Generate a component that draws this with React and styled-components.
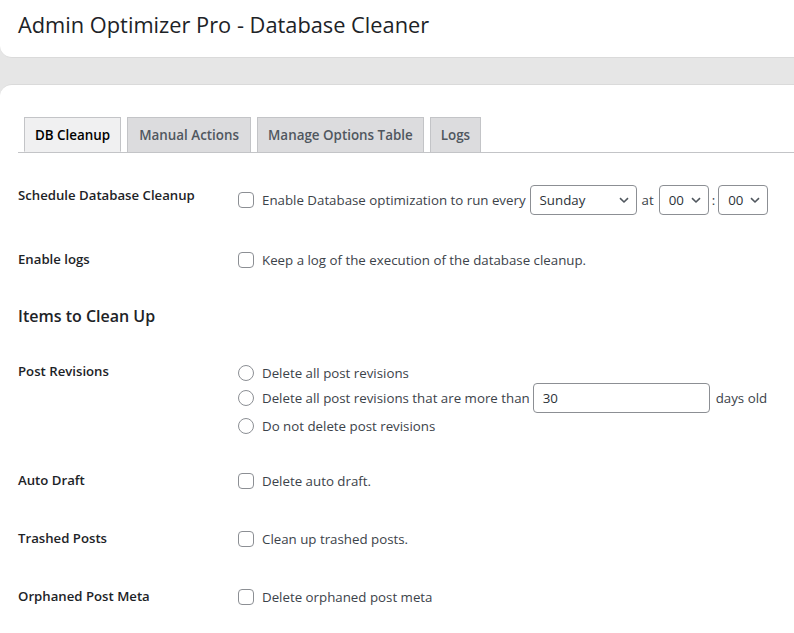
import React from 'react'
import styled, { createGlobalStyle } from 'styled-components'

const GlobalStyle = createGlobalStyle`
    body {
        margin: 0;
        background: #e6e6e6;
        font-family: "Open Sans", "Noto Sans", sans-serif;
        color: #3c434a;
    }
`;

const Header = styled.header`
    background: #fff;
    height: 58px;
    box-sizing: border-box;
    border-bottom: 1px solid #dadada;
    border-bottom-left-radius: 12px;
    padding: 9px 0 0 18px;
`;

const Title = styled.h1`
    margin: 0;
    font-size: 21.8px;
    font-weight: 400;
    color: #1d2327;
    line-height: 32px;
`;

const Card = styled.main`
    margin-top: 26px;
    background: #fff;
    border-top: 1px solid #dadada;
    border-top-left-radius: 12px;
    padding: 32px 0 0 18px;
    min-height: 540px;
`;

const TabBar = styled.nav`
    display: flex;
    gap: 6px;
    padding-left: 6px;
    border-bottom: 1px solid #c3c4c7;
    height: 35px;
`;

const Tab = styled.div`
    display: flex;
    align-items: center;
    padding: 0 ${({ px }) => px || 10}px;
    height: 35px;
    box-sizing: border-box;
    border: 1px solid #c3c4c7;
    border-bottom: ${({ active }) => (active ? '1px solid #f0f0f1' : 'none')};
    background: ${({ active }) => (active ? '#f0f0f1' : '#dcdcde')};
    color: ${({ active }) => (active ? '#000' : '#50575e')};
    font-weight: 600;
    font-size: 13.4px;
`;

const Form = styled.div`
    padding-top: 12px;
`;

const Row = styled.div`
    display: grid;
    grid-template-columns: 220px 1fr;
    padding: ${({ pad }) => pad || '20px 0'};
`;

const Label = styled.div`
    font-size: 13.2px;
    font-weight: 600;
    color: #1d2327;
    line-height: 20px;
`;

const Field = styled.div`
    display: flex;
    flex-direction: column;
    padding-top: ${({ top }) => top || 0}px;
`;

const Line = styled.label`
    display: flex;
    align-items: center;
    font-size: 13.3px;
    color: #3c434a;
    line-height: 20px;
    white-space: nowrap;
    margin-bottom: ${({ after }) => after || 0}px;
`;

const Check = styled.span`
    width: 16px;
    height: 16px;
    box-sizing: border-box;
    border: 1px solid #8c8f94;
    border-radius: ${({ round }) => (round ? '50%' : '4px')};
    background: #fff;
    margin-right: 8px;
    flex-shrink: 0;
`;

const Select = styled.div`
    display: inline-flex;
    align-items: center;
    justify-content: space-between;
    width: ${({ w }) => w}px;
    height: 30px;
    box-sizing: border-box;
    border: 1px solid #8c8f94;
    border-radius: 4px;
    padding: 0 6px 0 9px;
    margin: ${({ m }) => m};
    color: #2c3338;
    font-size: 13.3px;
    svg {
        flex-shrink: 0;
    }
`;

const Input = styled.div`
    width: 177px;
    height: 30px;
    box-sizing: border-box;
    border: 1px solid #8c8f94;
    border-radius: 4px;
    padding: 0 9px;
    margin: 0 6px 0 3px;
    display: flex;
    align-items: center;
    color: #2c3338;
    font-size: 13.3px;
`;

const Heading = styled.h2`
    margin: 0;
    font-size: 16px;
    font-weight: 600;
    color: #1d2327;
    line-height: 24px;
    padding: 14px 0 6px;
`;

const Chevron = () => (
    <svg width="12" height="12" viewBox="0 0 12 12">
        <path d="M2 4.2 L6 8 L10 4.2" fill="none" stroke="#50575e" strokeWidth="1.6" />
    </svg>
);

const Dropdown = ({ w, value, m }) => (
    <Select w={w} m={m}>
        <span>{value}</span>
        <Chevron />
    </Select>
);

const CheckRow = ({ label, text, pad }) => (
    <Row pad={pad}>
        <Label>{label}</Label>
        <Field top={1}>
            <Line><Check />{text}</Line>
        </Field>
    </Row>
);

const App = () => (
    <>
        <GlobalStyle />
        <Header>
            <Title>Admin Optimizer Pro - Database Cleaner</Title>
        </Header>
        <Card>
            <TabBar>
                <Tab active>DB Cleanup</Tab>
                <Tab px={11}>Manual Actions</Tab>
                <Tab>Manage Options Table</Tab>
                <Tab>Logs</Tab>
            </TabBar>
            <Form>
                <Row pad="20px 0 20px">
                    <Label>Schedule Database Cleanup</Label>
                    <Field>
                        <Line>
                            <Check />
                            Enable Database optimization to run every
                            <Dropdown w={107} value="Sunday" m="0 5px 0 4px" />
                            at
                            <Dropdown w={50} value="00" m="0 3px 0 5px" />
                            :
                            <Dropdown w={50} value="00" m="0 0 0 3px" />
                        </Line>
                    </Field>
                </Row>
                <CheckRow label="Enable logs" text="Keep a log of the execution of the database cleanup." pad="14px 0 20px" />
                <Heading>Items to Clean Up</Heading>
                <Row pad="27px 0 20px">
                    <Label>Post Revisions</Label>
                    <Field top={2}>
                        <Line><Check round />Delete all post revisions</Line>
                        <Line after={3}>
                            <Check round />
                            Delete all post revisions that are more than
                            <Input>30</Input>
                            days old
                        </Line>
                        <Line><Check round />Do not delete post revisions</Line>
                    </Field>
                </Row>
                <CheckRow label="Auto Draft" text="Delete auto draft." pad="14px 0 20px" />
                <CheckRow label="Trashed Posts" text="Clean up trashed posts." pad="17px 0 20px" />
                <CheckRow label="Orphaned Post Meta" text="Delete orphaned post meta" pad="17px 0 20px" />
            </Form>
        </Card>
    </>
)

export default App
